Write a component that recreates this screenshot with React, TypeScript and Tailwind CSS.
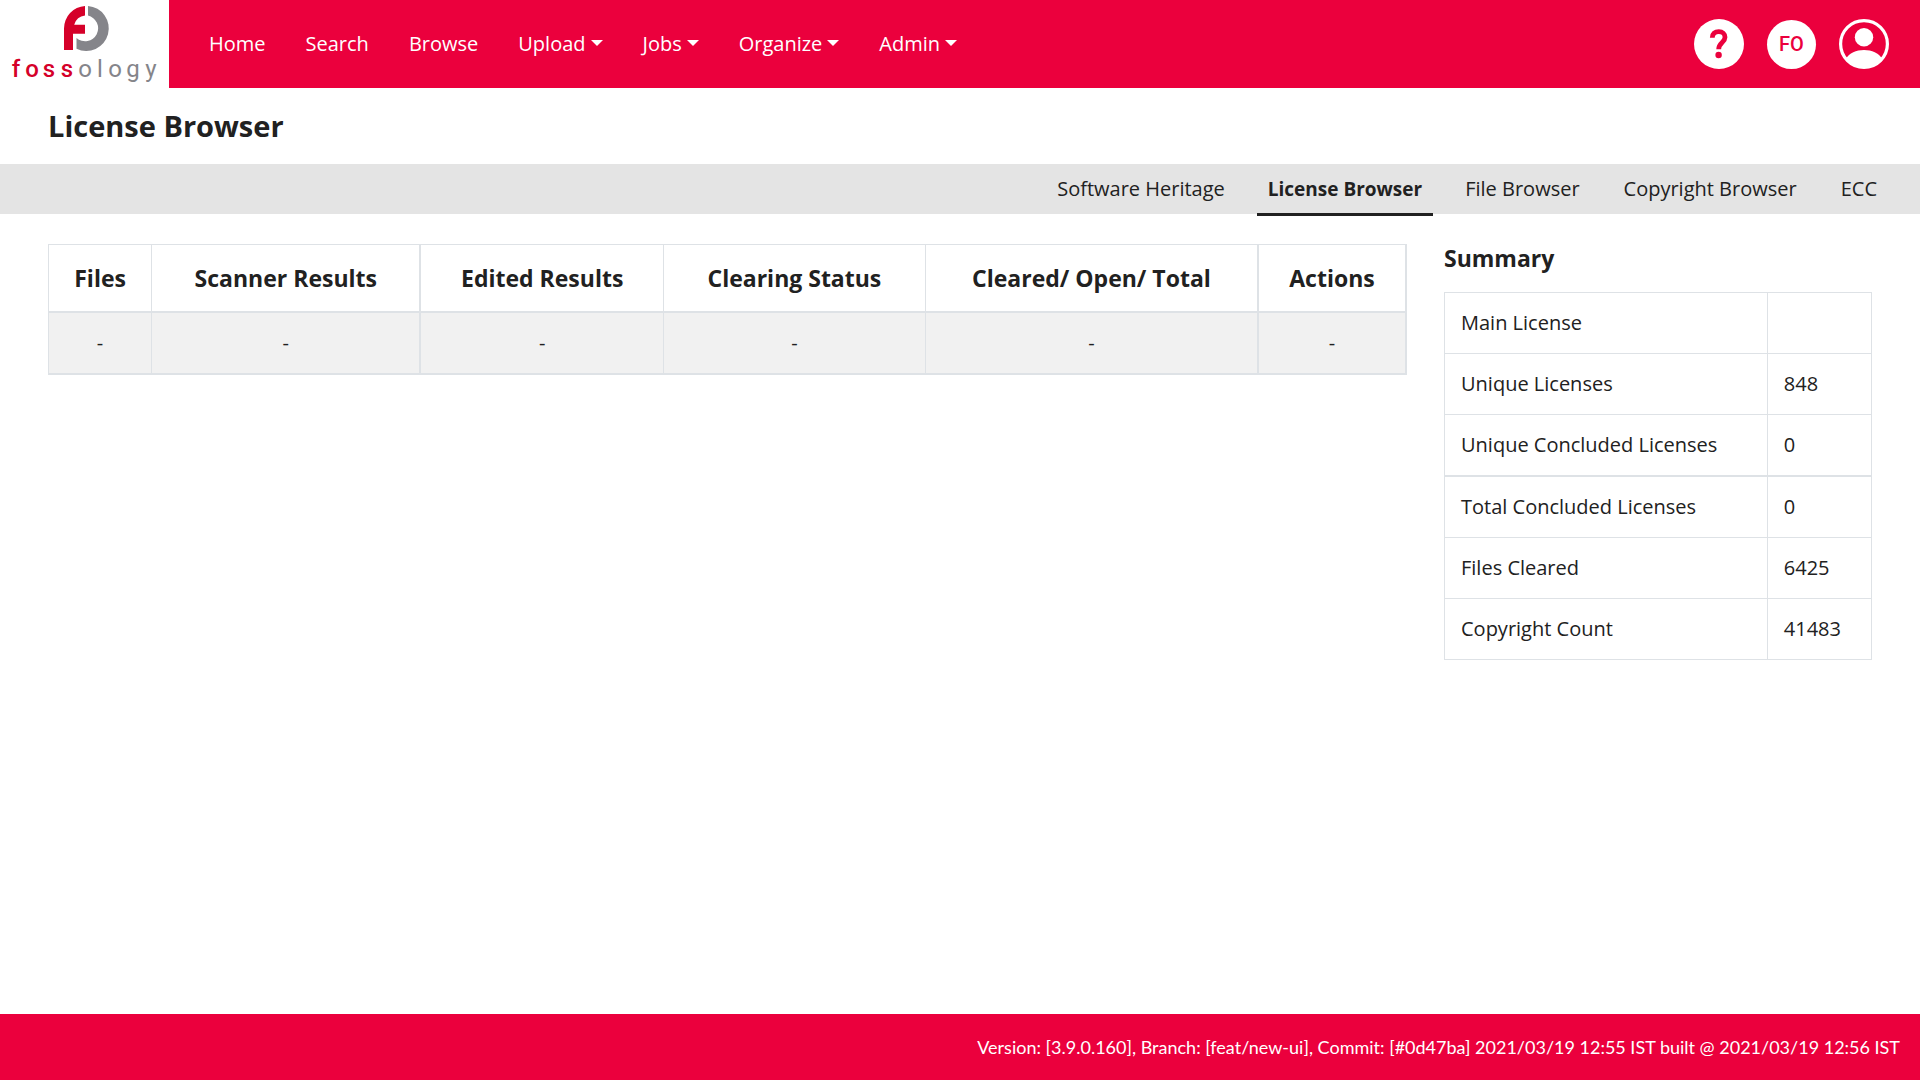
type MenuItem = { label: string; dropdown?: boolean };

const menu: MenuItem[] = [
  { label: "Home" },
  { label: "Search" },
  { label: "Browse" },
  { label: "Upload", dropdown: true },
  { label: "Jobs", dropdown: true },
  { label: "Organize", dropdown: true },
  { label: "Admin", dropdown: true },
];

const tabs = ["Software Heritage", "License Browser", "File Browser", "Copyright Browser", "ECC"];

const columns = [
  { title: "Files", className: "w-[7.6%] border" },
  { title: "Scanner Results", className: "w-[19.8%] border border-r-2" },
  { title: "Edited Results", className: "w-[17.9%] border" },
  { title: "Clearing Status", className: "w-[19.3%] border" },
  { title: "Cleared/ Open/ Total", className: "w-[24.5%] border border-r-2" },
  { title: "Actions", className: "w-[10.9%] border border-r-2" },
];

const summary = [
  { label: "Main License", value: "" },
  { label: "Unique Licenses", value: "848" },
  { label: "Unique Concluded Licenses", value: "0" },
  { label: "Total Concluded Licenses", value: "0", divided: true },
  { label: "Files Cleared", value: "6425" },
  { label: "Copyright Count", value: "41483" },
];

function Logo() {
  return (
    <svg viewBox="0 0 169 88" className="h-[88px] w-[169px]" role="img" aria-label="fossology">
      <path
        fill="#d50029"
        d="M85 6A22.5 22.5 0 0 0 64 28.5V50H73V33.7H85V24.7H74.2A13 13 0 0 1 85 15.6Z"
      />
      <path fill="#85858a" d="M88 6A22.5 22.5 0 1 1 76.5 48.7V38A13 13 0 1 0 88 15.6Z" />
      <text y="77" textAnchor="middle" className="font-['Roboto',sans-serif] text-[24px]">
        <tspan x="16 32 49 67" fill="#d50029" className="font-medium">foss</tspan>
        <tspan x="85 100 115 133 151" fill="#85858a">ology</tspan>
      </text>
    </svg>
  );
}

function HelpIcon() {
  return (
    <svg viewBox="0 0 50 50" className="size-[50px]" aria-hidden="true">
      <circle cx="25" cy="25" r="25" fill="#fff" />
      <path
        d="M18.3 18.8C18.3 14.6 21 12.7 24.8 12.7C28.6 12.7 31 14.8 31 18.2C31 23.6 24.7 23.4 24.7 30.2"
        fill="none"
        stroke="#eb003d"
        strokeWidth="4.8"
      />
      <circle cx="24.6" cy="36" r="3.2" fill="#eb003d" />
    </svg>
  );
}

function UserIcon() {
  return (
    <svg viewBox="0 0 50 50" className="size-[50px]" aria-hidden="true">
      <circle cx="25" cy="25" r="23.4" fill="none" stroke="#fff" strokeWidth="3.2" />
      <circle cx="25" cy="18.3" r="9.2" fill="#fff" />
      <path d="M6.5 40C10.5 34 17 31 25 31S39.5 34 43.5 40A24 24 0 0 1 6.5 40Z" fill="#fff" />
    </svg>
  );
}

function Header() {
  return (
    <header className="flex items-center bg-[#eb003d] pr-[31px]">
      <a href="#home" className="bg-white">
        <Logo />
      </a>
      <nav className="flex pl-5 text-white">
        {menu.map(({ label, dropdown }) =>
          dropdown ? (
            <button key={label} type="button" aria-haspopup="menu" className="flex items-center gap-[5px] px-5">
              {label}
              <span className="mb-[2px] border-x-6 border-t-6 border-x-transparent border-t-white" />
            </button>
          ) : (
            <a key={label} href={`#${label.toLowerCase()}`} className="px-5">
              {label}
            </a>
          ),
        )}
      </nav>
      <div className="ml-auto flex items-center gap-[23px]">
        <button type="button" aria-label="Help">
          <HelpIcon />
        </button>
        <button
          type="button"
          aria-label="Group FO"
          className="size-[49px] rounded-full bg-white font-['Roboto',sans-serif] font-medium text-[#eb003d]"
        >
          FO
        </button>
        <button type="button" aria-label="Account">
          <UserIcon />
        </button>
      </div>
    </header>
  );
}

function ResultsTable() {
  return (
    <table className="w-full table-fixed border-collapse text-center">
      <thead>
        <tr className="h-[67px]">
          {columns.map(({ title, className }) => (
            <th key={title} scope="col" className={`border-b-2 border-[#dee2e6] text-[23px] font-bold ${className}`}>
              {title}
            </th>
          ))}
        </tr>
      </thead>
      <tbody>
        <tr className="h-[62px] border-y-2 border-[#dee2e6] bg-[#f1f1f1]">
          {columns.map(({ title, className }) => (
            <td key={title} className={`border-[#dee2e6] ${className}`}>
              -
            </td>
          ))}
        </tr>
      </tbody>
    </table>
  );
}

function Summary() {
  return (
    <section>
      <h2 className="mb-5 text-[23px] leading-[28px] font-bold">Summary</h2>
      <table className="w-full border-collapse text-left">
        <tbody>
          {summary.map(({ label, value, divided }) => (
            <tr key={label} className={divided ? "h-[62px] border-t-2 border-[#dee2e6]" : "h-[61px] border-[#dee2e6]"}>
              <th scope="row" className="border border-[#dee2e6] px-4 font-normal">
                {label}
              </th>
              <td className="w-[24.4%] border border-[#dee2e6] px-4">{value}</td>
            </tr>
          ))}
        </tbody>
      </table>
    </section>
  );
}

export default function App() {
  return (
    <div className="flex min-h-screen flex-col bg-white font-['Open_Sans',sans-serif] text-[20px] leading-[30px] text-[#212121]">
      <Header />
      <h1 className="px-12 py-[18px] text-[29px] leading-[40px] font-bold">License Browser</h1>
      <nav className="flex h-[50px] justify-end gap-5 bg-[#e4e4e4] pr-[31px]">
        {tabs.map((tab) => (
          <a
            key={tab}
            href={`#${tab.toLowerCase().replace(" ", "-")}`}
            aria-current={tab === "License Browser" ? "page" : undefined}
            className={
              tab === "License Browser"
                ? "h-[52px] border-b-3 border-[#212121] px-[11px] pt-[10px] text-[19px] font-bold"
                : "px-3 pt-[10px]"
            }
          >
            {tab}
          </a>
        ))}
      </nav>
      <main className="flex grow items-start gap-[37px] px-12 pt-[30px]">
        <div className="min-w-0 flex-[1359]">
          <ResultsTable />
        </div>
        <div className="min-w-0 flex-[428]">
          <Summary />
        </div>
      </main>
      <footer className="bg-[#eb003d] px-5 py-[18px] text-right font-['Lato',sans-serif] text-[18px] text-white">
        Version: [3.9.0.160], Branch: [feat/new-ui], Commit: [#0d47ba] 2021/03/19 12:55 IST built @ 2021/03/19 12:56 IST
      </footer>
    </div>
  );
}
